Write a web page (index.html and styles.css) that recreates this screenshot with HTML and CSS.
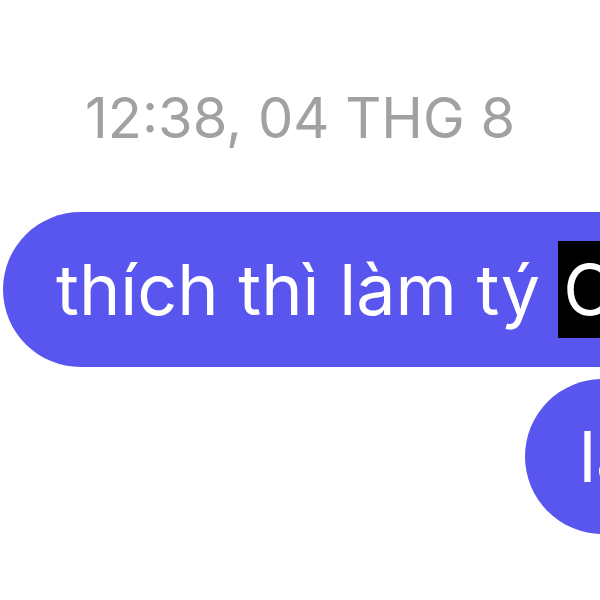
FILE: index.html
```html
<!DOCTYPE html>
<html lang="vi">
<head>
    <meta charset="UTF-8">
    <meta name="viewport" content="width=device-width, initial-scale=1.0">
    <title>Tin nhắn</title>
    <link rel="stylesheet" href="styles.css">
</head>
<body>
    <div class="chat">
        <!-- thời gian -->
        <div class="time">12:38, 04 THG 8</div>

        <!-- tin nhắn -->
        <div class="bubble first">
            thích thì làm tý <span class="mark">Ch</span>
        </div>
        <div class="bubble second">làm</div>
    </div>
</body>
</html>
```

FILE: styles.css
```css
* {
    margin: 0;
    padding: 0;
    box-sizing: border-box;
}

body, html {
    height: 100%;
    overflow: hidden;
    background: #fff;
    font-family: 'Inter', 'Roboto', sans-serif;
}

.chat {
    display: flex;
    flex-direction: column;
    align-items: flex-start;
    width: 1200px;
}

.time {
    margin: 86px 0 0 85px;
    font-size: 56px;
    line-height: 64px;
    color: #a1a1a1;
}

.bubble {
    height: 155px;
    display: flex;
    align-items: center;
    background-color: #5856ef;
    color: #fff;
    font-size: 70px;
    white-space: nowrap;
    border-radius: 78px;
}

.bubble.first {
    margin: 62px 0 0 3px;
    padding: 0 60px 0 53px;
}

.bubble.second {
    margin: 12px 0 0 525px;
    padding: 0 60px 0 54px;
}

/* ô bôi đen */
.mark {
    display: inline-block;
    margin-left: 18px;
    padding: 6px 5px;
    background: #000;
    line-height: 85px;
}
```
